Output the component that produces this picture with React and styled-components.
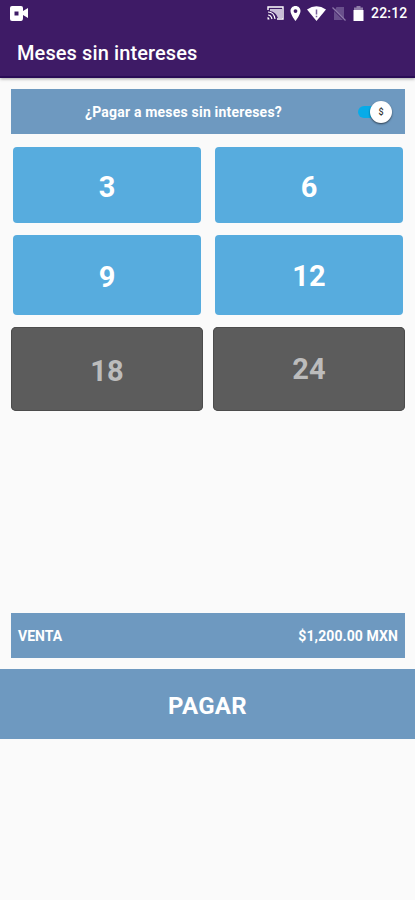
import React from "react";
import styled, { createGlobalStyle } from "styled-components";

const GlobalStyle = createGlobalStyle`
  * { box-sizing: border-box; }
  body { margin: 0; background: #fafafa; font-family: Roboto, sans-serif; }
  button { font: inherit; border: 0; margin: 0; padding: 0; }
`;

const Screen = styled.div`
  display: flex;
  flex-direction: column;
  width: 415px;
  height: 900px;
  background: #fafafa;
  overflow: hidden;
`;

const Header = styled.header`
  height: 78px;
  flex: none;
  background: #3e1b66;
  border-bottom: 2px solid #2a0c55;
  box-shadow: 0 1px 3px rgba(0, 0, 0, 0.35);
`;

const StatusBar = styled.div`
  height: 26px;
  display: flex;
  align-items: center;
  justify-content: space-between;
  padding: 0 8px 0 9px;
`;

const StatusIcons = styled.div`
  display: flex;
  align-items: center;
`;

const Icon = styled.svg`
  display: block;
  flex: none;
  margin-right: ${(p) => p.$gap || 0}px;
`;

const Clock = styled.span`
  width: 36px;
  font-size: 14px;
  line-height: 26px;
  font-weight: 500;
  letter-spacing: 0.2px;
  color: #fff;
  white-space: nowrap;
`;

const Title = styled.h1`
  margin: 0;
  padding-left: 17px;
  font-size: 20px;
  line-height: 54px;
  font-weight: 500;
  letter-spacing: 0.1px;
  color: #fff;
`;

const Banner = styled.section`
  display: flex;
  align-items: center;
  justify-content: space-between;
  flex: none;
  height: 45px;
  margin: ${(p) => p.$top}px 10px 0 11px;
  padding: 0 ${(p) => p.$right}px 0 ${(p) => p.$left}px;
  background: #6e99c0;
  color: #fff;
  font-size: 14px;
  font-weight: 700;
`;

const Label = styled.span`
  padding-top: 1px;
  letter-spacing: ${(p) => p.$spacing || 0}px;
`;

const Toggle = styled.button`
  display: flex;
  align-items: center;
  justify-content: flex-end;
  width: 34px;
  height: 12px;
  border-radius: 6px;
  background: linear-gradient(90deg, #08abe8 0 24px, transparent 24px);
`;

const Knob = styled.span`
  display: flex;
  align-items: center;
  justify-content: center;
  flex: none;
  width: 22px;
  height: 22px;
  border-radius: 50%;
  background: #fff;
  box-shadow: 0 1px 2px rgba(0, 0, 0, 0.6);
  color: #333;
  font-size: 9px;
  font-weight: 500;
`;

const Grid = styled.main`
  display: grid;
  flex: none;
  grid-template-columns: 192px 192px;
  grid-template-rows: 76px 80px 84px;
  column-gap: 10px;
  row-gap: 12px;
  margin: 13px 10px 0 11px;
`;

const Month = styled.button`
  margin: ${(p) => (p.disabled ? "0" : "0 2px")};
  padding: ${(p) => p.$drop}px 0 0;
  border-radius: ${(p) => (p.disabled ? 5 : 4)}px;
  background: ${(p) => (p.disabled ? "#5c5c5c" : "#57acde")};
  box-shadow: ${(p) => (p.disabled ? "inset 0 0 0 1px #4c4c4c" : "none")};
  color: ${(p) => (p.disabled ? "#bcbcbc" : "#fff")};
  font-size: 29px;
  font-weight: 700;
`;

const PayButton = styled.button`
  flex: none;
  height: 70px;
  margin-top: 11px;
  padding-top: 3px;
  background: #6e99c0;
  color: #fff;
  font-size: 24px;
  font-weight: 700;
  letter-spacing: 0.3px;
`;

const months = [
  { n: 3, drop: 4 },
  { n: 6, drop: 4 },
  { n: 9, drop: 4 },
  { n: 12, drop: 1 },
  { n: 18, off: true, drop: 3 },
  { n: 24, off: true, drop: 0 },
];

export default function App() {
  return (
    <Screen>
      <GlobalStyle />
      <Header>
        <StatusBar>
          <Icon width="20" height="15" viewBox="0 0 20 15">
            <path fill="#fff" fillRule="evenodd" d="M3 0h9q2 0 2 2v3l5-3v10l-5-3v3q0 3-2 3H3q-2 0-2-2V2q0-2 2-2zM5.500 5.500v4h4v-4z" />
          </Icon>
          <StatusIcons>
            <Icon $gap={6} width="17" height="14" viewBox="0 0 17 14" fill="none" stroke="#fff">
              <path strokeWidth="1.4" d="M1 4V1h15v12H10" />
              <path fill="#c9bdd8" stroke="none" d="M3 3h12v9h-4Q9 6 3 5z" />
              <path strokeWidth="1.2" d="M1 6q6 0 7 7M1 9q3 0 4 4" />
              <path fill="#fff" stroke="none" d="M.5 11q2 0 2 2.500h-2z" />
            </Icon>
            <Icon $gap={6} width="11" height="15" viewBox="0 0 11 15">
              <path fill="#fff" fillRule="evenodd" d="M5.500 0C2.500 0 .5 2.200.5 5c0 3.700 5 10 5 10s5-6.300 5-10c0-2.800-2-5-5-5zm0 3.200a1.900 1.900 0 1 1 0 3.800 1.900 1.900 0 0 1 0-3.800z" />
            </Icon>
            <Icon $gap={6} width="19" height="15" viewBox="0 0 19 15">
              <path fill="#fff" d="M0 3.500Q9.500-3 19 3.500L9.500 15z" />
              <path stroke="#77609a" strokeWidth="1.500" d="M9.500 3.500v5M9.500 9.700v1.600" />
            </Icon>
            <Icon $gap={7} width="14" height="15" viewBox="0 0 14 15">
              <path fill="#69508c" d="M4.500 1H12v12L3 4zM2 5l9 9H2z" />
              <path stroke="#8d79aa" strokeWidth="1.300" d="M.5 1.500l13 13" />
            </Icon>
            <Icon $gap={7} width="11" height="15" viewBox="0 0 11 15">
              <path fill="#8f7da8" d="M3.500 0h4v1.500H10V5H1V1.500h2.500z" />
              <path fill="#fff" d="M.5 4h10v11H.5z" />
            </Icon>
            <Clock>22:12</Clock>
          </StatusIcons>
        </StatusBar>
        <Title>Meses sin intereses</Title>
      </Header>
      <Banner $top={11} $left={74} $right={13}>
        <Label $spacing={0.2}>¿Pagar a meses sin intereses?</Label>
        <Toggle aria-label="Meses sin intereses">
          <Knob>$</Knob>
        </Toggle>
      </Banner>
      <Grid>
        {months.map((m) => (
          <Month key={m.n} disabled={m.off} $drop={m.drop}>{m.n}</Month>
        ))}
      </Grid>
      <Banner $top={202} $left={7} $right={7}>
        <Label>VENTA</Label>
        <Label $spacing={0.1}>$1,200.00 MXN</Label>
      </Banner>
      <PayButton>PAGAR</PayButton>
    </Screen>
  );
}
